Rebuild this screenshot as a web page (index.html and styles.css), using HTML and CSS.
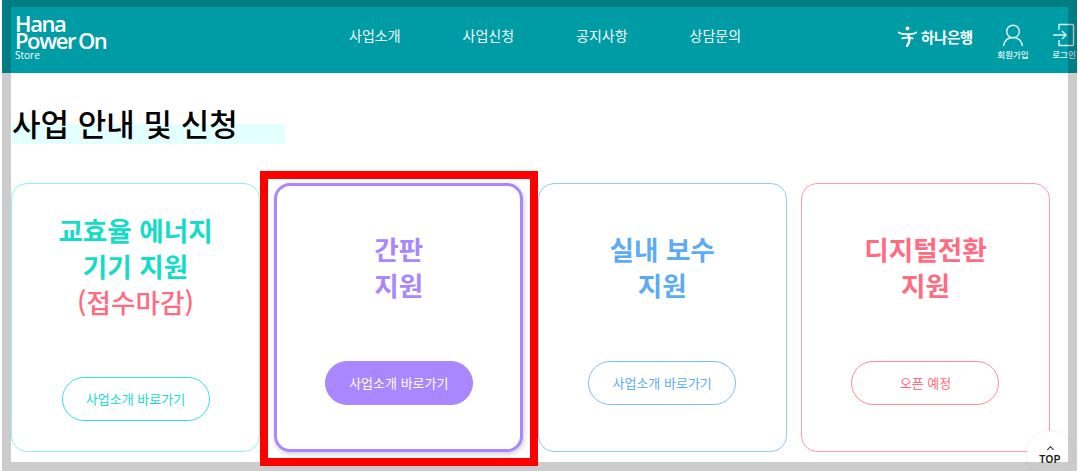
FILE: index.html
```html
<!DOCTYPE html>
<html lang="ko">
<head>
<meta charset="utf-8">
<title>사업 안내 및 신청</title>
<link rel="stylesheet" href="styles.css">
</head>
<body>
<div class="page">
  <header class="header">
    <div class="logo">
      <div class="logo-main">Hana</div>
      <div class="logo-main">Power On</div>
      <div class="logo-sub">Store</div>
    </div>
    <nav class="nav">
      <a>사업소개</a>
      <a>사업신청</a>
      <a>공지사항</a>
      <a>상담문의</a>
    </nav>
    <div class="bank">
      <svg class="bank-icon" viewBox="0 0 20 22" width="19" height="21" aria-hidden="true">
        <circle cx="10" cy="2.500" r="2" fill="#fff"/>
        <path d="M.7 6.800c4 2.400 14.600 2.400 18.600 0" fill="none" stroke="#fff" stroke-width="2" stroke-linecap="round"/>
        <path d="M4.500 13c3-1 8-1 11 0" fill="none" stroke="#fff" stroke-width="1.800" stroke-linecap="round"/>
        <path d="M11 9.500c1.800 4 1.200 8-1.500 11.500" fill="none" stroke="#fff" stroke-width="2.400" stroke-linecap="round"/>
      </svg>
      <span>하나은행</span>
    </div>
    <a class="util util-join">
      <svg viewBox="0 0 24 24" width="24" height="24" aria-hidden="true">
        <circle cx="12" cy="8.500" r="6.300" fill="none" stroke="#d8f4f5" stroke-width="1.500"/>
        <path d="M2.500 23c1-5.500 4.500-8.400 9.500-8.400s8.500 2.900 9.500 8.400" fill="none" stroke="#d8f4f5" stroke-width="1.500"/>
      </svg>
      <span>회원가입</span>
    </a>
    <a class="util util-login">
      <svg viewBox="0 0 24 24" width="24" height="24" aria-hidden="true">
        <path d="M7 7V1.500h13.500a1 1 0 0 1 1 1v19a1 1 0 0 1-1 1H7V17" fill="none" stroke="#d8f4f5" stroke-width="1.400"/>
        <path d="M1 12h13M10 8l4 4-4 4" fill="none" stroke="#d8f4f5" stroke-width="1.400"/>
      </svg>
      <span>로그인</span>
    </a>
  </header>
  <main class="main">
    <h1 class="title"><span class="title-text">사업 안내 및 신청</span></h1>
    <section class="cards">
      <article class="card card-teal">
        <h2 class="card-title">교효율 에너지<br>기기 지원<br><span class="closed">(접수마감)</span></h2>
        <a class="btn">사업소개 바로가기</a>
      </article>
      <article class="card card-purple">
        <h2 class="card-title">간판<br>지원</h2>
        <a class="btn">사업소개 바로가기</a>
      </article>
      <article class="card card-blue">
        <h2 class="card-title">실내 보수<br>지원</h2>
        <a class="btn">사업소개 바로가기</a>
      </article>
      <article class="card card-pink">
        <h2 class="card-title">디지털전환<br>지원</h2>
        <a class="btn">오픈 예정</a>
      </article>
    </section>
  </main>
  <a class="top"><span class="top-arrow"></span>TOP</a>
  <div class="frame"></div>
  <div class="highlight-box"></div>
</div>
</body>
</html>
```
FILE: styles.css
```css
* { box-sizing: border-box; }
html, body { margin: 0; height: 100%; background: #fff; overflow: hidden; }
body { font-family: "Noto Sans CJK KR", "Noto Sans", sans-serif; }
.page { position: relative; margin-left: 2px; width: 1075px; height: 471px; overflow: hidden; background: #fff; }

.header { display: flex; align-items: center; height: 73px; padding-top: 7px; background: #009ca6; color: #fff; }
.logo { flex: none; width: 255px; margin-top: -4px; padding-left: 13px; color: #fff; font-family: "Open Sans", sans-serif; }
.logo-main { font-size: 22px; font-weight: 600; line-height: 17px; letter-spacing: -1.400px; word-spacing: -1.500px; white-space: nowrap; }
.logo-sub { font-size: 10px; line-height: 13px; margin-top: 0; }
.nav { display: flex; flex: none; width: 454px; margin-left: 92px; margin-top: -10px; }
.nav a { width: 113.500px; text-align: left; font-size: 14px; line-height: 20px; color: #f2fbfb; }
.bank { display: flex; align-items: center; gap: 4px; flex: none; width: 97px; margin-left: 95px; font-size: 14.500px; font-weight: 700; letter-spacing: -.400px; margin-top: -8px; }
.bank-icon { flex: none; }
.util { display: flex; flex-direction: column; align-items: center; flex: none; font-size: 8.500px; line-height: 12px; color: #e6f7f7; gap: 1px; font-weight: 500; margin-top: 3px; }
.util-join { width: 36px; margin-right: 20px; }
.util-login { width: 26px; }

.main { padding-left: 9px; }
.title { margin: 0; height: 110px; padding-top: 27px; font-size: 31px; font-weight: 500; line-height: 45px; color: #000; }
.title-text { display: block; width: 273px; margin-left: 1px; background: linear-gradient(to bottom, transparent 24px, #e4ffff 24px, #e4ffff 44px, transparent 44px); white-space: nowrap; }

.cards { display: grid; grid-template-columns: repeat(4, 249px); column-gap: 14.330px; }
.card { display: flex; flex-direction: column; align-items: center; justify-content: center; gap: 58px; height: 269px; border: 1px solid; border-radius: 16px; background: #fff; }
.card-title { margin: 0; padding-top: 1px; font-size: 26.600px; line-height: 36px; font-weight: 700; text-align: center; }
.closed { color: #ff6b81; font-weight: 500; }
.btn { display: flex; align-items: center; justify-content: center; width: 148px; height: 44px; border: 1px solid; border-radius: 22px; font-size: 13px; line-height: 18px; }

.card-teal { gap: 57px; padding-bottom: 3px; border-color: #8ff2ee; color: #14dcc8; }
.card-teal .btn { border-color: #2ce6d6; }
.card-purple { border: 3px solid #a987ff; color: #a987ff; box-shadow: 1px 2px 5px rgba(0, 0, 0, .2); }
.card-purple .btn { background: #a987ff; border-color: #a987ff; color: #fff; }
.card-blue { border-color: #8fcbff; color: #5cabf5; }
.card-blue .btn { border-color: #7cc0fa; }
.card-pink { border-color: #ff9dac; color: #ff6b81; }
.card-pink .btn { border-color: #ff8a9b; }

.top { position: absolute; left: 1025px; top: 431px; width: 46px; height: 46px; border-radius: 50%; background: #fff; box-shadow: 0 0 4px rgba(0, 0, 0, .08); display: flex; flex-direction: column; align-items: center; padding-top: 14px; font-family: "Liberation Sans", sans-serif; font-size: 10px; font-weight: 700; line-height: 11px; color: #222; letter-spacing: .3px; }
.top-arrow { width: 5px; height: 5px; margin-top: 2px; margin-bottom: 2px; border-left: 1.500px solid #333; border-top: 1.500px solid #333; transform: rotate(45deg); }

.frame { position: absolute; inset: 0; border: 9px solid rgba(0, 0, 0, .2); border-top-width: 7px; pointer-events: none; }
.highlight-box { position: absolute; left: 258px; top: 171px; width: 278px; height: 295px; border: 8px solid #f00; pointer-events: none; }
```
